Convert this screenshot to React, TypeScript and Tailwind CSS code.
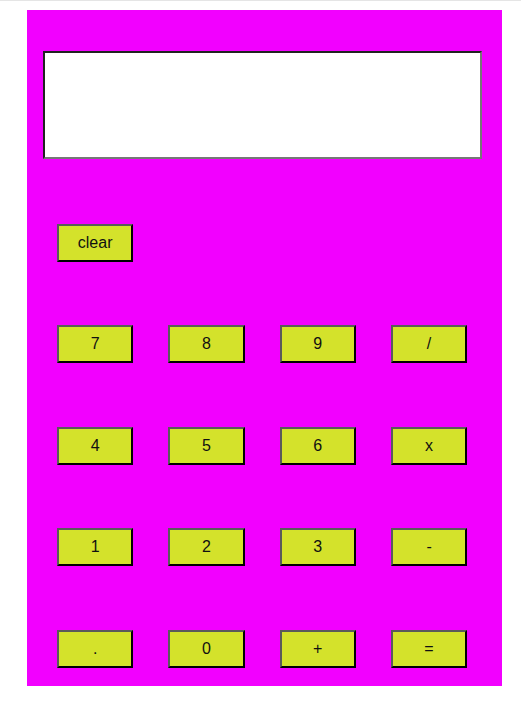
const rows: string[][] = [
  ["7", "8", "9", "/"],
  ["4", "5", "6", "x"],
  ["1", "2", "3", "-"],
  [".", "0", "+", "="],
];

function Key({ label }: { label: string }) {
  return (
    <button className="w-[76.3px] h-[38px] bg-[#d4e22b] border-2 border-t-[#5a5a5a] border-l-[#5a5a5a] border-r-black border-b-black text-[16px] text-[#111] flex items-center justify-center">
      {label}
    </button>
  );
}

export default function App() {
  return (
    <div className="w-[521px] h-[713px] bg-white border-t border-[#e5e5e5] font-['Liberation_Sans',Arial,sans-serif]">
      <div className="ml-[27px] mt-[9px] w-[475px] h-[676px] bg-[#f200ff] pt-[41px] pl-[16px]">
        {/* Display */}
        <div className="w-[439px] h-[108px] bg-white border-2 border-t-[#222] border-l-[#222] border-r-[#777] border-b-[#777]"></div>

        <div className="pl-[14px] pt-[65px] flex flex-col gap-[63.4px]">
          <div className="flex">
            <Key label="clear" />
          </div>
          {rows.map((row, i) => (
            <div key={i} className="flex gap-[35px]">
              {row.map((k) => (
                <Key key={k} label={k} />
              ))}
            </div>
          ))}
        </div>
      </div>
    </div>
  );
}
